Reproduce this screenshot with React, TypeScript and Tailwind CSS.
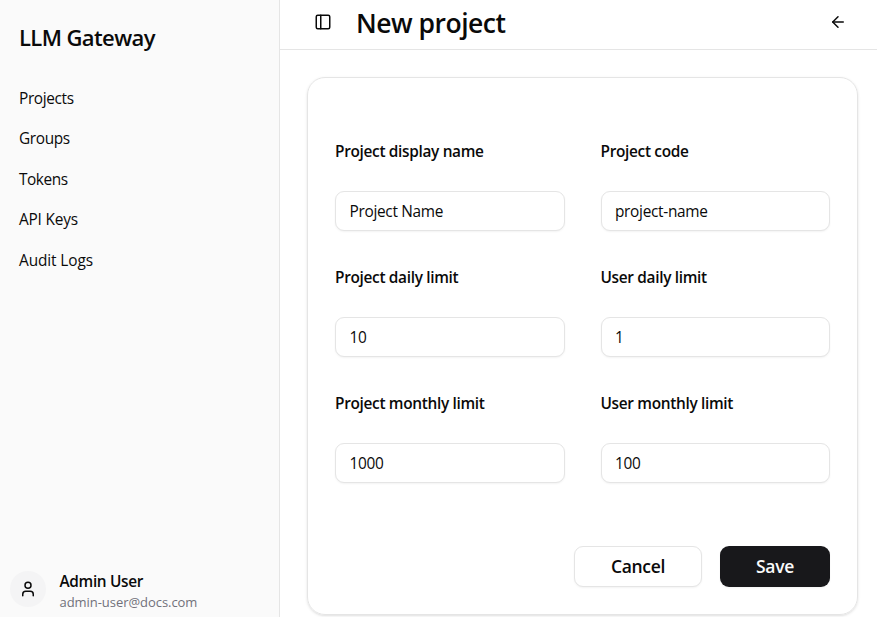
import { ArrowLeft, PanelLeft, User } from "lucide-react";

const navItems = [
  { label: "Projects", style: "tracking-[-0.35px]" },
  { label: "Groups", style: "tracking-[-0.35px]" },
  { label: "Tokens", style: "tracking-[-0.45px]" },
  { label: "API Keys", style: "tracking-[-0.2px]" },
  { label: "Audit Logs", style: "tracking-[-0.1px]" },
];

const fields = [
  { label: "Project display name", value: "Project Name" },
  { label: "Project code", value: "project-name" },
  { label: "Project daily limit", value: "10" },
  { label: "User daily limit", value: "1" },
  { label: "Project monthly limit", value: "1000" },
  { label: "User monthly limit", value: "100" },
];

function Sidebar() {
  return (
    <aside className="flex w-[280px] shrink-0 flex-col border-r border-[#e5e5e5] bg-[#fafafa]">
      <div className="px-[19px] pt-[21px] text-[22px] leading-[33px] font-semibold tracking-[-0.6px]">
        LLM Gateway
      </div>
      <nav className="mt-6 flex flex-col">
        {navItems.map((item) => (
          <a key={item.label} className={"flex h-[40.5px] items-center px-[19px] text-[15.4px] " + item.style}>
            {item.label}
          </a>
        ))}
      </nav>
      <div className="mt-auto mb-[5px] flex h-[41px] items-start gap-[13.5px] pl-[10px]">
        <div className="flex size-9 items-center justify-center rounded-full bg-[#f4f4f5]">
          <User size={18} />
        </div>
        <div className="flex flex-col">
          <span className="text-[15.4px] leading-[21px] font-semibold tracking-[-0.35px]">Admin User</span>
          <span className="text-[13px] leading-5 tracking-[-0.05px] text-[#71717a]">admin-user@docs.com</span>
        </div>
      </div>
    </aside>
  );
}

function Field({ label, value }: { label: string; value: string }) {
  return (
    <label className="flex h-[126px] flex-col">
      <span className="h-[50px] text-[15.4px] leading-[22px] font-semibold tracking-[-0.32px]">{label}</span>
      <input
        defaultValue={value}
        className="h-10 w-full rounded-[9px] border border-[#e5e5e5] bg-white px-[13.5px] text-[15.4px] tracking-[-0.3px] shadow-xs outline-none"
      />
    </label>
  );
}

export default function App() {
  return (
    <div className="flex h-[617px] w-[877px] overflow-hidden bg-white font-['Open_Sans','Noto_Sans',sans-serif] text-[#0a0a0a]">
      <Sidebar />
      <main className="flex min-w-0 flex-1 flex-col">
        <header className="flex h-[50px] shrink-0 items-center border-b border-[#e5e5e5] pr-[30px] pb-[5px] pl-[34px]">
          <PanelLeft size={18} />
          <h1 className="ml-6 pt-px text-[26.5px] leading-9 font-semibold tracking-[-0.5px]">New project</h1>
          <ArrowLeft size={18} className="ml-auto" />
        </header>
        <section className="mt-[27px] ml-[27px] flex h-[538px] w-[551px] shrink-0 flex-col rounded-[18px] border border-[#e5e5e5] px-[27px] pt-[63px] shadow-sm">
          <div className="grid grid-cols-2 gap-x-9">
            {fields.map((field) => (
              <Field key={field.label} label={field.label} value={field.value} />
            ))}
          </div>
          <div className="mt-[27px] flex justify-end gap-[18px]">
            <button className="h-[41px] w-32 rounded-[9px] border border-[#e5e5e5] bg-white text-[17.5px] font-semibold tracking-[-0.35px] shadow-xs">
              Cancel
            </button>
            <button className="h-[41px] w-[110px] rounded-[9px] bg-[#18181b] text-[17.5px] font-semibold tracking-[-0.35px] text-[#fafafa] shadow-xs">
              Save
            </button>
          </div>
        </section>
      </main>
    </div>
  );
}
